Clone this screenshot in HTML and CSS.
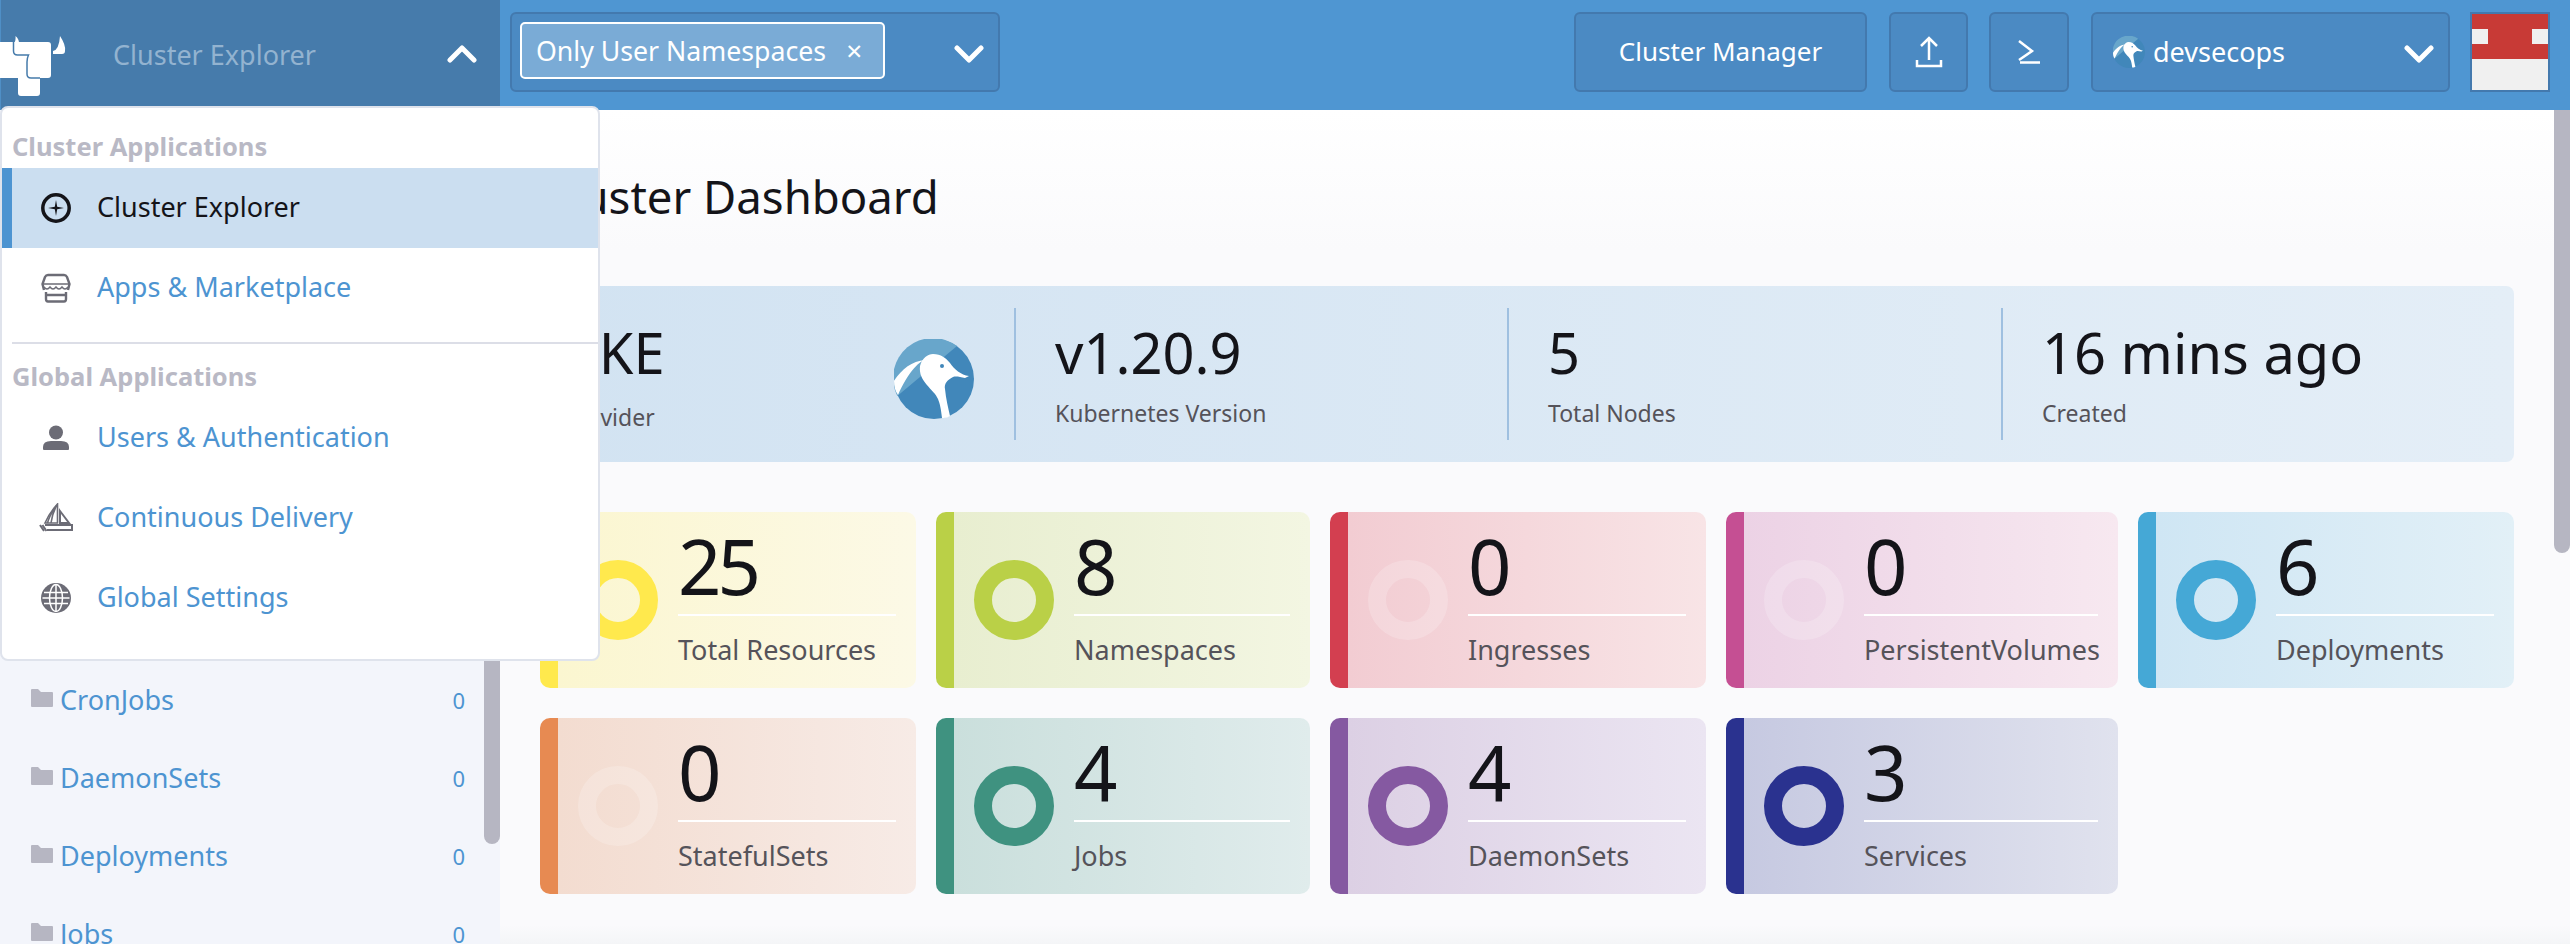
FILE: index.html
```html
<!DOCTYPE html>
<html lang="en">
<head>
<meta charset="utf-8">
<title>Cluster Dashboard</title>
<link rel="stylesheet" href="styles.css">
</head>
<body>
<header class="topbar">
  <div class="brand">
    <svg class="bull" viewBox="0 0 66 78" width="66" height="78">
      <path fill="#fff" d="M0 24H48Q51 24 51 27V57Q51 60 48 60H40V75Q40 78 37 78H21Q18 78 18 75V60H0Z"/>
      <path fill="#fff" d="M14 25Q16 23 15.500 18Q19 21 19 25Z"/>
      <path fill="#fff" d="M53 33Q59 32 60 18Q66 27 65 33Q65 36 62 36H53Z"/>
      <path fill="none" stroke="#467bab" stroke-width="1.500" d="M13.500 18V33Q13.500 37 17.500 37H28.500Q27 40 27 44V56Q27 60 31 60H40"/>
    </svg>
    <span class="brand-name">Cluster Explorer</span>
    <svg class="chev chev-up" viewBox="0 0 30 18" width="30" height="18"><path d="M3 15 15 3 27 15" fill="none" stroke="#fff" stroke-width="5" stroke-linecap="round" stroke-linejoin="round"/></svg>
  </div>
  <div class="ns-select">
    <div class="ns-tag"><span>Only User Namespaces</span><span class="ns-x">×</span></div>
    <svg class="chev" viewBox="0 0 30 18" width="30" height="18"><path d="M3 3 15 15 27 3" fill="none" stroke="#fff" stroke-width="5" stroke-linecap="round" stroke-linejoin="round"/></svg>
  </div>
  <div class="tools">
    <div class="btn btn-manager"><span>Cluster Manager</span></div>
    <div class="btn btn-upload">
      <svg viewBox="0 0 28 32" width="28" height="32"><path d="M14 24V2M6 10 14 2 22 10M2 24V30H26V24" fill="none" stroke="#fff" stroke-width="2.500"/></svg>
    </div>
    <div class="btn btn-shell">
      <svg viewBox="0 0 24 24" width="24" height="24"><path d="M2 1 15 11 2 20" fill="none" stroke="#fff" stroke-width="2.500"/><path d="M3 22.500H23" fill="none" stroke="#fff" stroke-width="2.500"/></svg>
    </div>
    <div class="btn btn-cluster">
      <svg class="penguin-sm" viewBox="0 0 80 80" width="32" height="32">
        <circle cx="40" cy="40" r="40" fill="#4187ba"/>
        <path fill="#68a6cb" d="M63 7A40 40 0 0 0 3.300 57Z"/>
        <path fill="#fff" d="M0 41.700C8 30 18 22 31 21C24 23 14 34 4 56C1 52 0 47 0 41.700Z"/>
        <path fill="#fff" d="M26 27C28 19 34 15 39 15C47 15 52 19 56 24C60 30 67 36 75 37L71 39C66 38 62 37 59 38C53 41 50 45 51 50C52 60 54 68 56 77C53 79 50 79 48 79C47 70 46 65 44 60C40 50 24 43 26 27Z"/>
        <circle cx="48" cy="27" r="2" fill="#4187ba"/>
      </svg>
      <span class="cluster-name">devsecops</span>
      <svg class="chev" viewBox="0 0 30 18" width="30" height="18"><path d="M3 3 15 15 27 3" fill="none" stroke="#fff" stroke-width="5" stroke-linecap="round" stroke-linejoin="round"/></svg>
    </div>
    <div class="avatar"><i></i><i></i></div>
  </div>
</header>

<div class="page">
  <aside class="sidebar">
    <div class="side-row"><svg class="folder" viewBox="0 0 22 18" width="22" height="18"><path d="M0 1Q0 0 1 0H7L10 3H21Q22 3 22 4V17Q22 18 21 18H1Q0 18 0 17Z"/></svg><span class="side-name">CronJobs</span><span class="side-count">0</span></div>
    <div class="side-row"><svg class="folder" viewBox="0 0 22 18" width="22" height="18"><path d="M0 1Q0 0 1 0H7L10 3H21Q22 3 22 4V17Q22 18 21 18H1Q0 18 0 17Z"/></svg><span class="side-name">DaemonSets</span><span class="side-count">0</span></div>
    <div class="side-row"><svg class="folder" viewBox="0 0 22 18" width="22" height="18"><path d="M0 1Q0 0 1 0H7L10 3H21Q22 3 22 4V17Q22 18 21 18H1Q0 18 0 17Z"/></svg><span class="side-name">Deployments</span><span class="side-count">0</span></div>
    <div class="side-row"><svg class="folder" viewBox="0 0 22 18" width="22" height="18"><path d="M0 1Q0 0 1 0H7L10 3H21Q22 3 22 4V17Q22 18 21 18H1Q0 18 0 17Z"/></svg><span class="side-name">Jobs</span><span class="side-count">0</span></div>
    <div class="side-thumb"></div>
  </aside>

  <main class="main">
    <h1 class="title">Cluster Dashboard</h1>

    <section class="info">
      <div class="info-cell info-first">
        <div class="info-text">
          <div class="info-value">RKE</div>
          <div class="info-label info-label-low">Provider</div>
        </div>
        <svg class="penguin" viewBox="0 0 80 80" width="80" height="80">
          <circle cx="40" cy="40" r="40" fill="#4187ba"/>
          <path fill="#68a6cb" d="M63 7A40 40 0 0 0 3.300 57Z"/>
          <path fill="#fff" d="M0 41.700C8 30 18 22 31 21C24 23 14 34 4 56C1 52 0 47 0 41.700Z"/>
          <path fill="#fff" d="M26 27C28 19 34 15 39 15C47 15 52 19 56 24C60 30 67 36 75 37L71 39C66 38 62 37 59 38C53 41 50 45 51 50C52 60 54 68 56 77C53 79 50 79 48 79C47 70 46 65 44 60C40 50 24 43 26 27Z"/>
          <circle cx="48" cy="27" r="2" fill="#4187ba"/>
        </svg>
      </div>
      <div class="info-cell"><div class="info-value">v1.20.9</div><div class="info-label">Kubernetes Version</div></div>
      <div class="info-cell"><div class="info-value">5</div><div class="info-label">Total Nodes</div></div>
      <div class="info-cell"><div class="info-value">16 mins ago</div><div class="info-label">Created</div></div>
    </section>

    <section class="cards">
      <div class="card c-yellow"><div class="ring"></div><div class="card-text"><div class="card-num">25</div><div class="card-label">Total Resources</div></div></div>
      <div class="card c-lime"><div class="ring"></div><div class="card-text"><div class="card-num">8</div><div class="card-label">Namespaces</div></div></div>
      <div class="card c-red zero"><div class="ring"></div><div class="card-text"><div class="card-num">0</div><div class="card-label">Ingresses</div></div></div>
      <div class="card c-pink zero"><div class="ring"></div><div class="card-text"><div class="card-num">0</div><div class="card-label">PersistentVolumes</div></div></div>
      <div class="card c-blue"><div class="ring"></div><div class="card-text"><div class="card-num">6</div><div class="card-label">Deployments</div></div></div>
      <div class="card c-orange zero"><div class="ring"></div><div class="card-text"><div class="card-num">0</div><div class="card-label">StatefulSets</div></div></div>
      <div class="card c-teal"><div class="ring"></div><div class="card-text"><div class="card-num">4</div><div class="card-label">Jobs</div></div></div>
      <div class="card c-purple"><div class="ring"></div><div class="card-text"><div class="card-num">4</div><div class="card-label">DaemonSets</div></div></div>
      <div class="card c-navy"><div class="ring"></div><div class="card-text"><div class="card-num">3</div><div class="card-label">Services</div></div></div>
    </section>
    <div class="main-thumb"></div>
  </main>
</div>

<nav class="menu">
  <div class="menu-head">Cluster Applications</div>
  <div class="menu-item active">
    <svg viewBox="0 0 30 30" width="30" height="30"><circle cx="15" cy="15" r="13.200" fill="none" stroke="#141419" stroke-width="3.500"/><path fill="#141419" d="M15 7 16.200 13.800 23 15 16.200 16.200 15 23 13.800 16.200 7 15 13.800 13.800Z"/></svg>
    <span>Cluster Explorer</span>
  </div>
  <div class="menu-item">
    <svg viewBox="0 0 30 30" width="30" height="30" fill="none" stroke="#6c6c76" stroke-width="2.400"><path d="M3 17 1.500 11 4 4Q5 2 7 2H23Q25 2 26 4L28.500 11 27 17"/><path d="M5 19V26Q5 28.500 7 28.500H23Q25 28.500 25 26V19M5 22H25"/><path stroke-width="1.400" d="M2 11H28M3 14Q6 18 9 14Q12 18 15 14Q18 18 21 14Q24 18 27 14"/></svg>
    <span>Apps &amp; Marketplace</span>
  </div>
  <div class="menu-divider"></div>
  <div class="menu-head menu-head-2">Global Applications</div>
  <div class="menu-item">
    <svg viewBox="0 0 30 30" width="30" height="30" fill="#6c6c76"><circle cx="15" cy="9.500" r="7"/><path d="M2 26V24Q2 18 10 18H20Q28 18 28 24V26Q28 27 27 27H3Q2 27 2 26Z"/></svg>
    <span>Users &amp; Authentication</span>
  </div>
  <div class="menu-item">
    <svg class="boat" viewBox="0 0 34 30" width="34" height="30" fill="none" stroke="#6c6c76" stroke-width="1.600"><path d="M18.500 1V20H6C9 13 14 6 18.500 1Z"/><path d="M12 20C13 13 15 7 18 2M8.500 20C10 14 13 9 16 4.500"/><path stroke-width="2" d="M21 8 30 20H21Z"/><path stroke-width="2" d="M6 22H33V27H8M1 22 5 28M3.500 22 7.500 28"/></svg>
    <span>Continuous Delivery</span>
  </div>
  <div class="menu-item">
    <svg viewBox="0 0 30 30" width="30" height="30"><circle cx="15" cy="15" r="15" fill="#6c6c76"/><path fill="none" stroke="#fff" stroke-width="1.500" d="M3 9.500H27M1.500 15H28.500M3 20.500H27"/><ellipse cx="15" cy="15" rx="6.500" ry="13.500" fill="none" stroke="#fff" stroke-width="1.500"/><path stroke="#fff" stroke-width="1.500" d="M15 1.500V28.500"/></svg>
    <span>Global Settings</span>
  </div>
</nav>
</body>
</html>
```

FILE: styles.css
```css
* { box-sizing: border-box; }
html, body { margin: 0; height: 100%; }
body {
  position: relative;
  width: 2570px;
  height: 944px;
  overflow: hidden;
  font-family: "Noto Sans", "Open Sans", sans-serif;
  color: #141419;
  background: #fafafc;
}

/* top bar */
.topbar {
  display: flex;
  align-items: flex-start;
  height: 110px;
  background: #4f96d2;
}
.brand {
  display: flex;
  align-items: center;
  width: 500px;
  height: 110px;
  background: #467bab;
  border-left: 1px solid #4f8fc6;
}
.bull { flex: none; margin: 4px 0 0 -1px; }
.brand-name {
  margin-left: 47px;
  margin-top: -2px;
  font-size: 27px;
  color: #93b3d0;
}
.chev { flex: none; display: block; }
.chev-up { margin: 0 23px 3px auto; }
.ns-select {
  display: flex;
  align-items: center;
  justify-content: space-between;
  width: 490px;
  height: 80px;
  margin: 12px 0 0 10px;
  padding: 0 14px 0 8px;
  background: #4b8ac3;
  border: 2px solid #4379ae;
  border-radius: 6px;
}
.ns-select .chev { margin-top: 4px; }
.ns-tag {
  display: flex;
  align-items: center;
  width: 365px;
  height: 57px;
  margin-top: -3px;
  padding: 0 0 1px 14px;
  font-size: 26.700px;
  color: #fff;
  background: #7aabd6;
  border: 2px solid #fff;
  border-radius: 5px;
}
.ns-x { margin-left: 20px; font-size: 28px; }
.tools {
  display: flex;
  margin: 12px 0 0 auto;
  padding-right: 20px;
}
.btn {
  display: flex;
  align-items: center;
  justify-content: center;
  height: 80px;
  font-size: 26px;
  color: #fff;
  background: #4b8ac3;
  border: 2px solid #4379ae;
  border-radius: 6px;
}
.btn-manager { width: 293px; padding-bottom: 3px; }
.btn-upload { width: 79px; margin-left: 22px; }
.btn-shell { width: 80px; margin-left: 21px; }
.btn-cluster {
  width: 359px;
  margin-left: 22px;
  padding: 0 14px 0 20px;
  justify-content: flex-start;
}
.btn-cluster .chev { margin-top: 4px; }
.penguin-sm { flex: none; }
.cluster-name { margin: -2px auto 0 8px; font-size: 27px; }
.avatar {
  position: relative;
  width: 80px;
  height: 80px;
  margin-left: 20px;
  background: linear-gradient(#c83a36 0 45px, #f0f0f0 45px);
  border: 2px solid #4379ae;
}
.avatar i {
  position: absolute;
  top: 15px;
  left: 0;
  width: 16px;
  height: 15px;
  background: #f0f0f0;
}
.avatar i + i { left: auto; right: 0; }

/* page body */
.page {
  display: flex;
  height: 834px;
}
.sidebar {
  position: relative;
  flex: none;
  width: 500px;
  padding: 551px 0 0 31px;
  overflow: hidden;
  background: #f3f5fb;
}
.side-row {
  display: flex;
  align-items: center;
  height: 78px;
  padding-right: 35px;
  font-size: 27px;
  color: #4d94d1;
}
.folder { flex: none; fill: #b6b6c2; margin-top: -4px; }
.side-name { margin-left: 7px; margin-right: auto; margin-top: -2px; }
.side-count { font-size: 22px; }
.side-thumb {
  position: absolute;
  top: 0;
  right: 0;
  width: 16px;
  height: 734px;
  background: #b6b6c2;
  border-radius: 0 0 8px 8px;
}
.main {
  position: relative;
  flex: 1;
  padding: 58px 56px 0 40px;
  background: linear-gradient(#fff 0, #fafafc 140px, #fafafc 815px, #f4f5f7 834px);
}
.main-thumb {
  position: absolute;
  top: 0;
  right: 0;
  width: 16px;
  height: 443px;
  background: #b6b6c2;
  border-radius: 0 0 8px 8px;
}
.title {
  margin: 0;
  height: 56px;
  font-size: 45.500px;
  font-weight: 400;
  line-height: 56px;
}

/* info strip */
.info {
  display: grid;
  grid-template-columns: 474px 493px 494px 493px;
  height: 176px;
  margin-top: 62px;
  padding: 22px 20px 22px 0;
  background: linear-gradient(90deg, #d2e3f2, #e4eef7);
  border-radius: 8px;
}
.info-cell {
  height: 132px;
  padding: 8px 0 0 39px;
  border-left: 2px solid #9fc0e0;
}
.info-first {
  display: flex;
  justify-content: space-between;
  padding-left: 24px;
  padding-right: 40px;
  border-left: 0;
}
.info-value {
  font-size: 56px;
  line-height: 72px;
}
.info-label {
  margin-top: 9px;
  font-size: 23px;
  line-height: 32px;
  color: #55535a;
}
.info-label-low { margin-top: 13px; }
.penguin { flex: none; margin-top: 23px; }

/* cards */
.cards {
  display: grid;
  grid-template-columns: 376px 374px 376px 392px 376px;
  grid-auto-rows: 176px;
  gap: 30px 20px;
  margin-top: 50px;
}
.card {
  display: flex;
  align-items: center;
  padding: 0 20px 0 20px;
  border-left: 18px solid var(--c);
  border-radius: 10px;
  background: linear-gradient(90deg, var(--from), var(--to));
}
.ring {
  flex: none;
  width: 80px;
  height: 80px;
  border: 18px solid var(--c);
  border-radius: 50%;
}
.zero .ring { border-color: rgba(255, 255, 255, 0.2); }
.card-text {
  flex: 1;
  min-width: 0;
  margin-left: 20px;
  align-self: flex-start;
}
.card-num {
  height: 104px;
  padding-top: 8px;
  font-size: 76px;
  letter-spacing: -4px;
  line-height: 92px;
  border-bottom: 2px solid #fff;
}
.card-label {
  margin-top: 16px;
  font-size: 27px;
  line-height: 36px;
  white-space: nowrap;
  color: #55535a;
}
.c-yellow { --c: #ffe94d; --from: #fbf6d0; --to: #fcf9e6; }
.c-lime { --c: #bad047; --from: #e8eed0; --to: #f3f6e2; }
.c-red { --c: #d33f50; --from: #f2ccd2; --to: #f8e4e6; }
.c-pink { --c: #c54f93; --from: #ecd2e5; --to: #f7e8f0; }
.c-blue { --c: #45a8d6; --from: #cfe6f4; --to: #e2f0f7; }
.c-orange { --c: #e78a52; --from: #f3dcd0; --to: #f7ebe6; }
.c-teal { --c: #3f9280; --from: #cadfdc; --to: #e0ecec; }
.c-purple { --c: #8559a1; --from: #dcd0e4; --to: #ebe5f2; }
.c-navy { --c: #2a328f; --from: #c6c9e1; --to: #e0e2ee; }

/* dropdown menu */
.menu {
  position: absolute;
  top: 106px;
  left: 0;
  width: 600px;
  height: 555px;
  padding-top: 60px;
  background: #fff;
  border: 2px solid #dfe3ec;
  border-radius: 8px;
}
.menu-head {
  position: absolute;
  top: 20px;
  left: 10px;
  font-size: 25.500px;
  font-weight: 700;
  line-height: 36px;
  color: #b9b9c5;
}
.menu-head-2 { position: static; height: 54px; margin-left: 10px; padding-top: 14px; }
.menu-item {
  display: flex;
  align-items: center;
  height: 80px;
  padding-left: 39px;
  font-size: 27px;
  color: #4d94d1;
}
.menu-item svg { flex: none; }
.menu-item span { margin: -3px 0 0 26px; }
.menu-item .boat { margin-left: -2px; }
.menu-item .boat + span { margin-left: 24px; }
.menu-item.active {
  padding-left: 29px;
  color: #141419;
  background: #cbdef0;
  border-left: 10px solid #4d94d1;
}
.menu-divider {
  height: 2px;
  margin: 14px 0 0 10px;
  background: #dcdee7;
}
```
